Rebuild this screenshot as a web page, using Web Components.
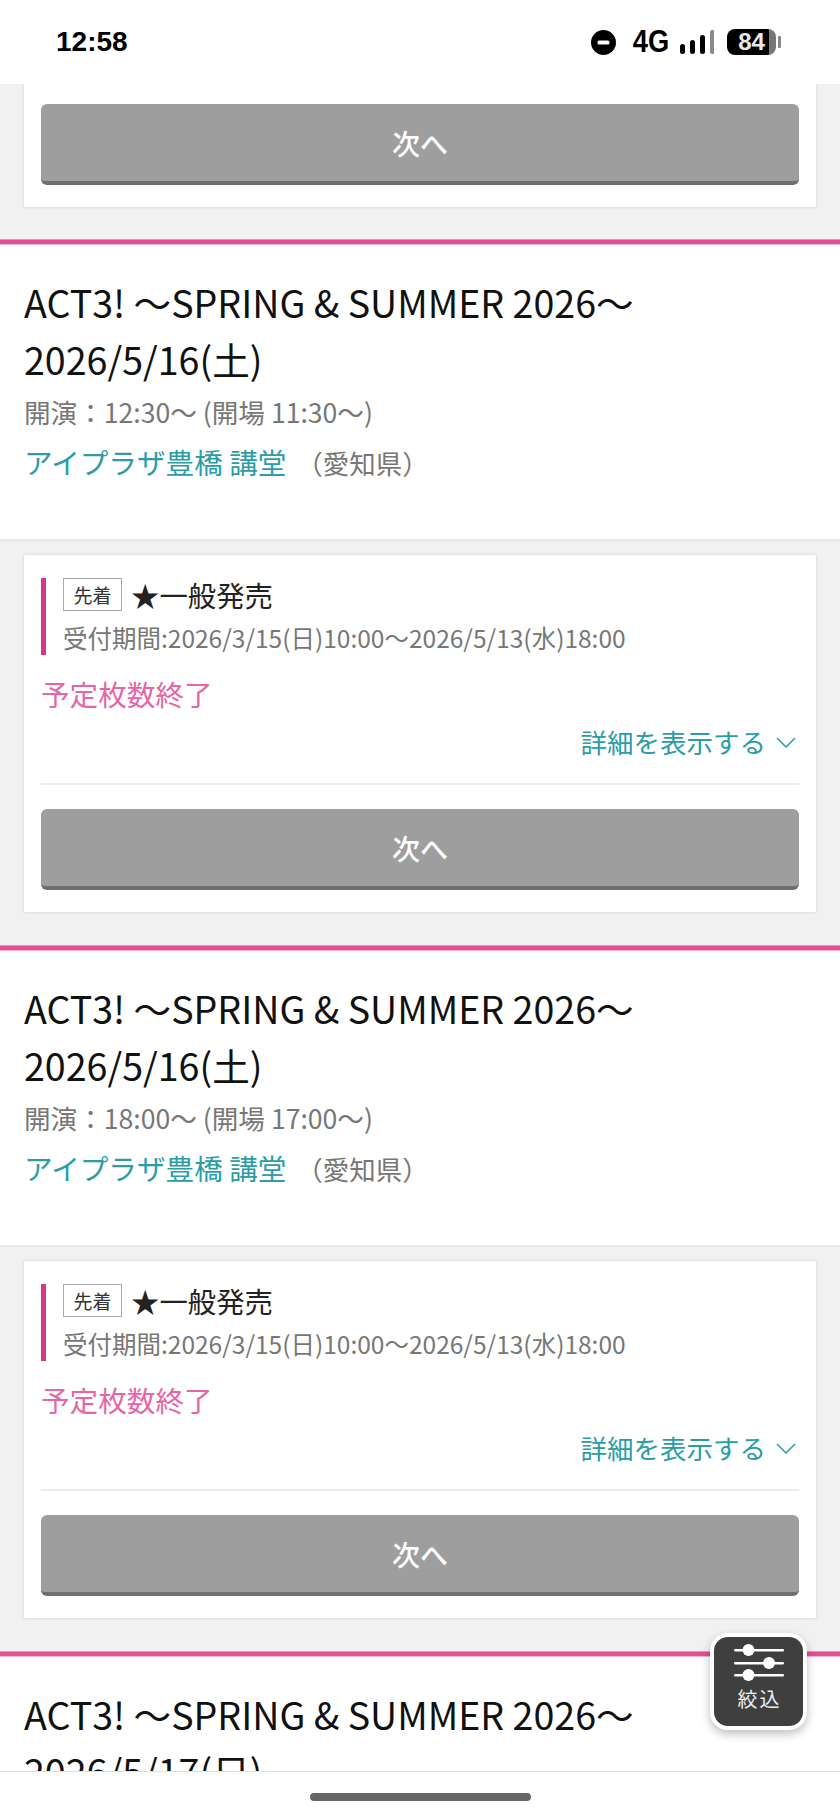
<!DOCTYPE html>
<html lang="ja">

<head>
    <meta charset="UTF-8">
    <meta name="viewport" content="width=device-width, initial-scale=1.0">
    <title>ACT3! tickets</title>
    <style>
        html, body { margin: 0; padding: 0; background: #fff; }
        body { font-family: "Noto Sans CJK JP", "Noto Sans", sans-serif; }
    </style>
</head>

<body>
    <app-screen>
        <status-bar slot="top"></status-bar>

        <ticket-gap first>
            <ticket-card compact><next-button>次へ</next-button></ticket-card>
        </ticket-gap>

        <event-head date="2026/5/16(土)" time="開演：12:30～ (開場 11:30～)"></event-head>
        <ticket-gap>
            <ticket-card>
                <sale-info></sale-info>
                <next-button>次へ</next-button>
            </ticket-card>
        </ticket-gap>

        <event-head date="2026/5/16(土)" time="開演：18:00～ (開場 17:00～)"></event-head>
        <ticket-gap>
            <ticket-card>
                <sale-info></sale-info>
                <next-button>次へ</next-button>
            </ticket-card>
        </ticket-gap>

        <event-head date="2026/5/17(日)" time="開演：12:30～ (開場 11:30～)"></event-head>

        <home-bar slot="bottom"></home-bar>
        <filter-button slot="over"></filter-button>
    </app-screen>

    <script>
        function shadow(el, html) {
            el.attachShadow({ mode: 'open' }).innerHTML = html;
            return el.shadowRoot;
        }

        customElements.define('app-screen', class extends HTMLElement {
            constructor() {
                super();
                shadow(this, `
                    <style>
                        :host { display: flex; flex-direction: column; position: relative; width: 840px; height: 1820px; overflow: hidden; background: #fff; }
                        .scroll { flex: 1; min-height: 0; overflow: hidden; }
                    </style>
                    <slot name="top"></slot>
                    <div class="scroll"><slot></slot></div>
                    <slot name="bottom"></slot>
                    <slot name="over"></slot>`);
            }
        });

        customElements.define('status-bar', class extends HTMLElement {
            constructor() {
                super();
                shadow(this, `
                    <style>
                        :host { display: flex; align-items: center; justify-content: space-between; height: 84px; padding: 0 59px 0 56px; box-sizing: border-box; background: #fff; color: #000; font-family: "Liberation Sans", sans-serif; font-weight: 700; }
                        .time { font-size: 28px; margin-top: -1px; }
                        .right { display: flex; align-items: center; }
                        .net { font-size: 31px; margin: 0 11px 0 17px; transform: scaleX(.88); width: 36px; display: flex; justify-content: center; }
                        svg { display: block; }
                        .batt { position: relative; display: flex; align-items: center; justify-content: center; width: 49px; height: 26px; margin-left: 13px; border-radius: 8px; background: linear-gradient(90deg, #000 0 42px, #777 42px); color: #e8e8e8; font-size: 24px; }
                        .nub { width: 3px; height: 12px; margin-left: 2px; background: #888; border-radius: 1px; }
                    </style>
                    <span class="time">12:58</span>
                    <div class="right">
                        <svg width="25" height="25" viewBox="0 0 25 25"><circle cx="12.5" cy="12.5" r="12.5" fill="#000"/><rect x="6.5" y="10.5" width="12" height="4" rx="1.5" fill="#fff"/></svg>
                        <span class="net">4G</span>
                        <svg width="34" height="24" viewBox="0 0 34 24">
                            <rect x="0" y="14" width="5" height="10" rx="2.5" fill="#000"/>
                            <rect x="10" y="10" width="5" height="14" rx="2.5" fill="#000"/>
                            <rect x="20" y="5" width="5" height="19" rx="2.5" fill="#000"/>
                            <rect x="30" y="0" width="4.5" height="24" rx="2" fill="#8a8a8a"/>
                        </svg>
                        <span class="batt">84</span>
                        <span class="nub"></span>
                    </div>`);
            }
        });

        customElements.define('event-head', class extends HTMLElement {
            constructor() {
                super();
                shadow(this, `
                    <style>
                        :host { display: block; background: #fff; border-top: 6px solid #e44f94; border-image: linear-gradient(#ee8fba 0 1px, #e44f94 1px 5px, #f3b4d1 5px) 6 0 0; padding: 28px 24px 51px; font-family: "Noto Sans CJK JP", "Noto Sans", sans-serif; }
                        h2 { margin: 0; font-size: 37.6px; line-height: 57px; font-weight: 400; color: #111; }
                        .time { font-size: 26.6px; line-height: 50px; color: #777; }
                        .place { font-size: 28.6px; line-height: 50px; color: #2a9da6; }
                        .pref { font-size: 26.5px; color: #777; margin-left: 10px; }
                    </style>
                    <h2>ACT3! ～SPRING &amp; SUMMER 2026～<br><span id="date"></span></h2>
                    <div class="time" id="time"></div>
                    <div class="place">アイプラザ豊橋 講堂<span class="pref">（愛知県）</span></div>`);
            }
            connectedCallback() {
                this.shadowRoot.getElementById('date').textContent = this.getAttribute('date');
                this.shadowRoot.getElementById('time').textContent = this.getAttribute('time');
            }
        });

        customElements.define('ticket-gap', class extends HTMLElement {
            constructor() {
                super();
                shadow(this, `
                    <style>
                        :host { display: block; background: #f1f1f1; border-top: 2px solid #e8e8e8; padding: 14px 24px 33px 24px; }
                        :host([first]) { border-top: 0; padding-top: 0; padding-bottom: 32px; }
                    </style>
                    <slot></slot>`);
            }
        });

        customElements.define('ticket-card', class extends HTMLElement {
            constructor() {
                super();
                shadow(this, `
                    <style>
                        :host { display: block; background: #fff; box-shadow: 0 0 3px rgba(0,0,0,.14); padding: 23px 17px 22px; }
                        :host([compact]) { padding-top: 20px; }
                    </style>
                    <slot></slot>`);
            }
        });

        customElements.define('sale-info', class extends HTMLElement {
            constructor() {
                super();
                shadow(this, `
                    <style>
                        :host { display: block; font-family: "Noto Sans CJK JP", "Noto Sans", sans-serif; }
                        .head { border-left: 5px solid #d6378b; padding-left: 17px; height: 77px; box-sizing: border-box; }
                        .row { display: flex; align-items: center; gap: 9px; height: 33px; }
                        .tag { display: flex; align-items: center; justify-content: center; width: 59px; height: 33px; box-sizing: border-box; border: 1px solid #aaa; font-size: 19px; color: #333; }
                        .name { font-size: 28.4px; color: #222; }
                        .period { margin-top: 10px; font-size: 24.5px; line-height: 34px; color: #777; white-space: nowrap; }
                        .state { margin-top: 19px; font-size: 28.6px; line-height: 40px; color: #e665a6; }
                        .more { display: flex; align-items: center; justify-content: flex-end; gap: 10px; margin-top: 8px; padding-right: 3px; font-size: 26.5px; line-height: 40px; color: #2a9da6; }
                        hr { margin: 21px 0 24px; border: 0; height: 2px; background: #ececec; }
                    </style>
                    <div class="head">
                        <div class="row"><span class="tag">先着</span><span class="name">★一般発売</span></div>
                        <div class="period">受付期間:2026/3/15(日)10:00～2026/5/13(水)18:00</div>
                    </div>
                    <div class="state">予定枚数終了</div>
                    <div class="more">詳細を表示する
                        <svg width="20" height="11" viewBox="0 0 20 11"><path d="M1 1l9 9 9-9" fill="none" stroke="#2a9da6" stroke-width="1.5"/></svg>
                    </div>
                    <hr>`);
            }
        });

        customElements.define('next-button', class extends HTMLElement {
            constructor() {
                super();
                shadow(this, `
                    <style>
                        :host { display: flex; align-items: center; justify-content: center; height: 81px; box-sizing: border-box; background: #9e9e9e; border-bottom: 4px solid #6f6f6f; border-radius: 6px; color: #fff; font-family: "Noto Sans CJK JP", "Noto Sans", sans-serif; font-size: 28px; font-weight: 500; }
                    </style>
                    <slot></slot>`);
            }
        });

        customElements.define('home-bar', class extends HTMLElement {
            constructor() {
                super();
                shadow(this, `
                    <style>
                        :host { display: flex; justify-content: center; height: 49px; box-sizing: border-box; padding-top: 21px; background: #fff; border-top: 1px solid #e0e0e0; }
                        i { display: block; width: 221px; height: 8px; border-radius: 4px; background: #666; }
                    </style>
                    <i></i>`);
            }
        });

        // floats over the list, bottom right
        customElements.define('filter-button', class extends HTMLElement {
            constructor() {
                super();
                shadow(this, `
                    <style>
                        :host { position: absolute; left: 710px; top: 1633px; width: 97px; height: 97px; box-sizing: border-box; border: 4px solid #fff; border-radius: 18px; background: #3f3f3f; box-shadow: 0 4px 10px rgba(0,0,0,.25); color: #eee; font-family: "Noto Sans CJK JP", "Noto Sans", sans-serif; text-align: center; }
                        svg { display: block; margin: 7px auto 0; }
                        span { display: block; font-size: 20px; line-height: 28px; letter-spacing: 2px; margin-top: 3px; padding-left: 2px; }
                    </style>
                    <svg width="50" height="38" viewBox="0 0 50 38" fill="#fff">
                        <rect x="0" y="5" width="50" height="2.4" rx="1.2"/>
                        <rect x="0" y="18" width="50" height="2.4" rx="1.2"/>
                        <rect x="0" y="30" width="50" height="2.4" rx="1.2"/>
                        <circle cx="14.5" cy="6" r="6"/>
                        <circle cx="35" cy="19" r="6"/>
                        <circle cx="14.5" cy="31" r="6"/>
                    </svg>
                    <span>絞込</span>`);
            }
        });
    </script>
</body>

</html>
